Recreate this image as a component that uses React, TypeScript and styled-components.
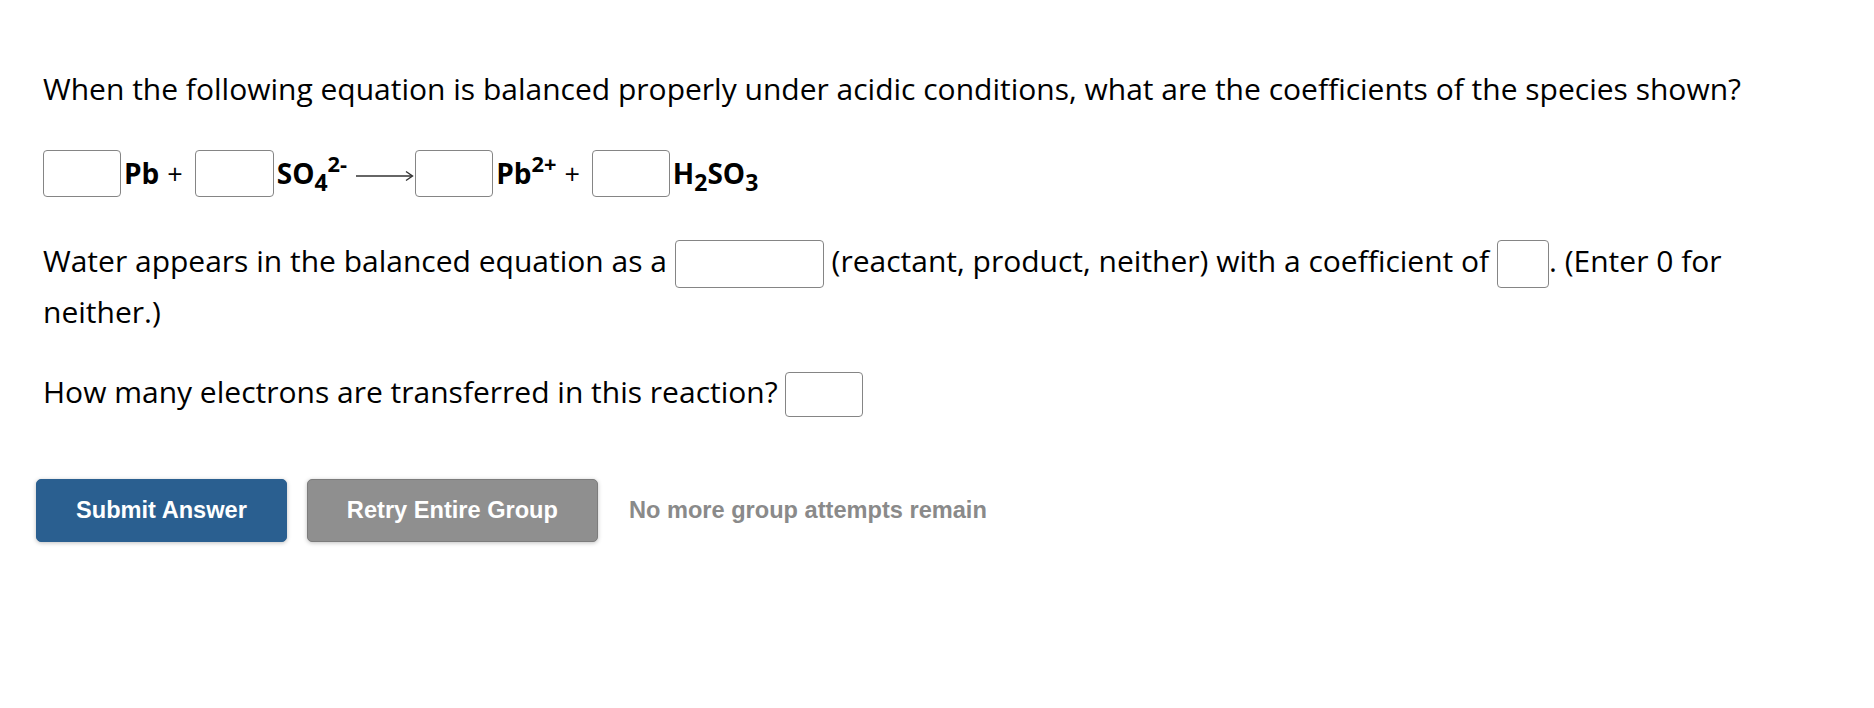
import React from "react";
import styled, { createGlobalStyle } from "styled-components";

const GlobalStyle = createGlobalStyle`
  html, body {
    margin: 0;
    padding: 0;
    background: #ffffff;
  }
  body {
    font-family: "Open Sans", "Liberation Sans", sans-serif;
    color: #000;
  }
`;

const Page = styled.div`
  width: 1874px;
  height: 708px;
  box-sizing: border-box;
  padding: 65px 0 0 43px;
  overflow: hidden;
`;

const Question = styled.div`
  width: 1740px;
  font-size: 30px;
  line-height: 47px;
`;

const Para = styled.p<{ $top: number }>`
  margin: ${(p) => p.$top}px 0 0;
`;

const EquationRow = styled.div`
  display: flex;
  align-items: center;
  height: 48px;
  margin-top: 37px;
  font-weight: 700;
  font-size: 28px;
  line-height: 1;
`;

const Species = styled.span`
  margin-left: 3px;
  white-space: pre;
`;

const Plus = styled.span`
  font-weight: 400;
  font-size: 27px;
  margin: 0 12px 0 8px;
`;

const Sub = styled.sub`
  font-size: 0.82em;
  vertical-align: -0.32em;
  line-height: 0;
`;

const Sup = styled.sup`
  font-size: 0.78em;
  vertical-align: 0.55em;
  line-height: 0;
`;

const Box = styled.input<{ $w: number; $h?: number }>`
  box-sizing: border-box;
  width: ${(p) => p.$w}px;
  height: ${(p) => p.$h ?? 48}px;
  border: 1.5px solid #858585;
  border-radius: 4px;
  background: #fff;
  padding: 0;
  margin: 0;
  font: inherit;
  vertical-align: middle;
  outline: none;
`;

const Arrow = styled.svg`
  width: 58px;
  height: 14px;
  margin: 6px 1px 0 9px;
  flex: none;
`;

const ButtonRow = styled.div`
  display: flex;
  align-items: center;
  margin: 62px 0 0 -7px;
  font-family: "Liberation Sans", Arial, sans-serif;
  font-weight: 700;
  font-size: 23.6px;
`;

const Button = styled.button<{ $variant: "primary" | "muted" }>`
  box-sizing: border-box;
  height: 63px;
  padding: 0 39px;
  border-radius: 5px;
  font: inherit;
  color: #fff;
  cursor: pointer;
  margin-right: 20px;
  box-shadow: 0 1px 4px rgba(0, 0, 0, 0.25);
  background: ${(p) => (p.$variant === "primary" ? "#2a5f90" : "#8f8f8f")};
  border: 1.5px solid ${(p) => (p.$variant === "primary" ? "#2a5f90" : "#7c7c7c")};
`;

const Notice = styled.span`
  color: #8a8a8a;
  margin-left: 11px;
`;

export default function App() {
  return (
    <Page>
      <GlobalStyle />
      <Question>
        <Para $top={0}>
          When the following equation is balanced properly under acidic conditions, what are the
          coefficients of the species shown?
        </Para>
        <EquationRow>
          <Box $w={78} $h={47} />
          <Species>Pb</Species>
          <Plus>+</Plus>
          <Box $w={79} $h={47} />
          <Species>
            SO<Sub>4</Sub>
            <Sup>2-</Sup>
          </Species>
          <Arrow viewBox="0 0 58 14">
            <line x1="0" y1="7" x2="56" y2="7" stroke="#333" strokeWidth="1.4" />
            <path d="M50 2.5 L56.5 7 L50 11.5" fill="none" stroke="#333" strokeWidth="1.4" />
          </Arrow>
          <Box $w={78} $h={47} />
          <Species>
            Pb<Sup>2+</Sup>
          </Species>
          <Plus>+</Plus>
          <Box $w={78} $h={47} />
          <Species>
            H<Sub>2</Sub>SO<Sub>3</Sub>
          </Species>
        </EquationRow>
        <Para $top={40}>
          Water appears in the balanced equation as a <Box $w={149} /> (reactant, product, neither)
          with a coefficient of <Box $w={52} />. (Enter 0 for neither.)
        </Para>
        <Para $top={33}>
          How many electrons are transferred in this reaction? <Box $w={78} $h={45} />
        </Para>
      </Question>
      <ButtonRow>
        <Button $variant="primary">Submit Answer</Button>
        <Button $variant="muted">Retry Entire Group</Button>
        <Notice>No more group attempts remain</Notice>
      </ButtonRow>
    </Page>
  );
}
